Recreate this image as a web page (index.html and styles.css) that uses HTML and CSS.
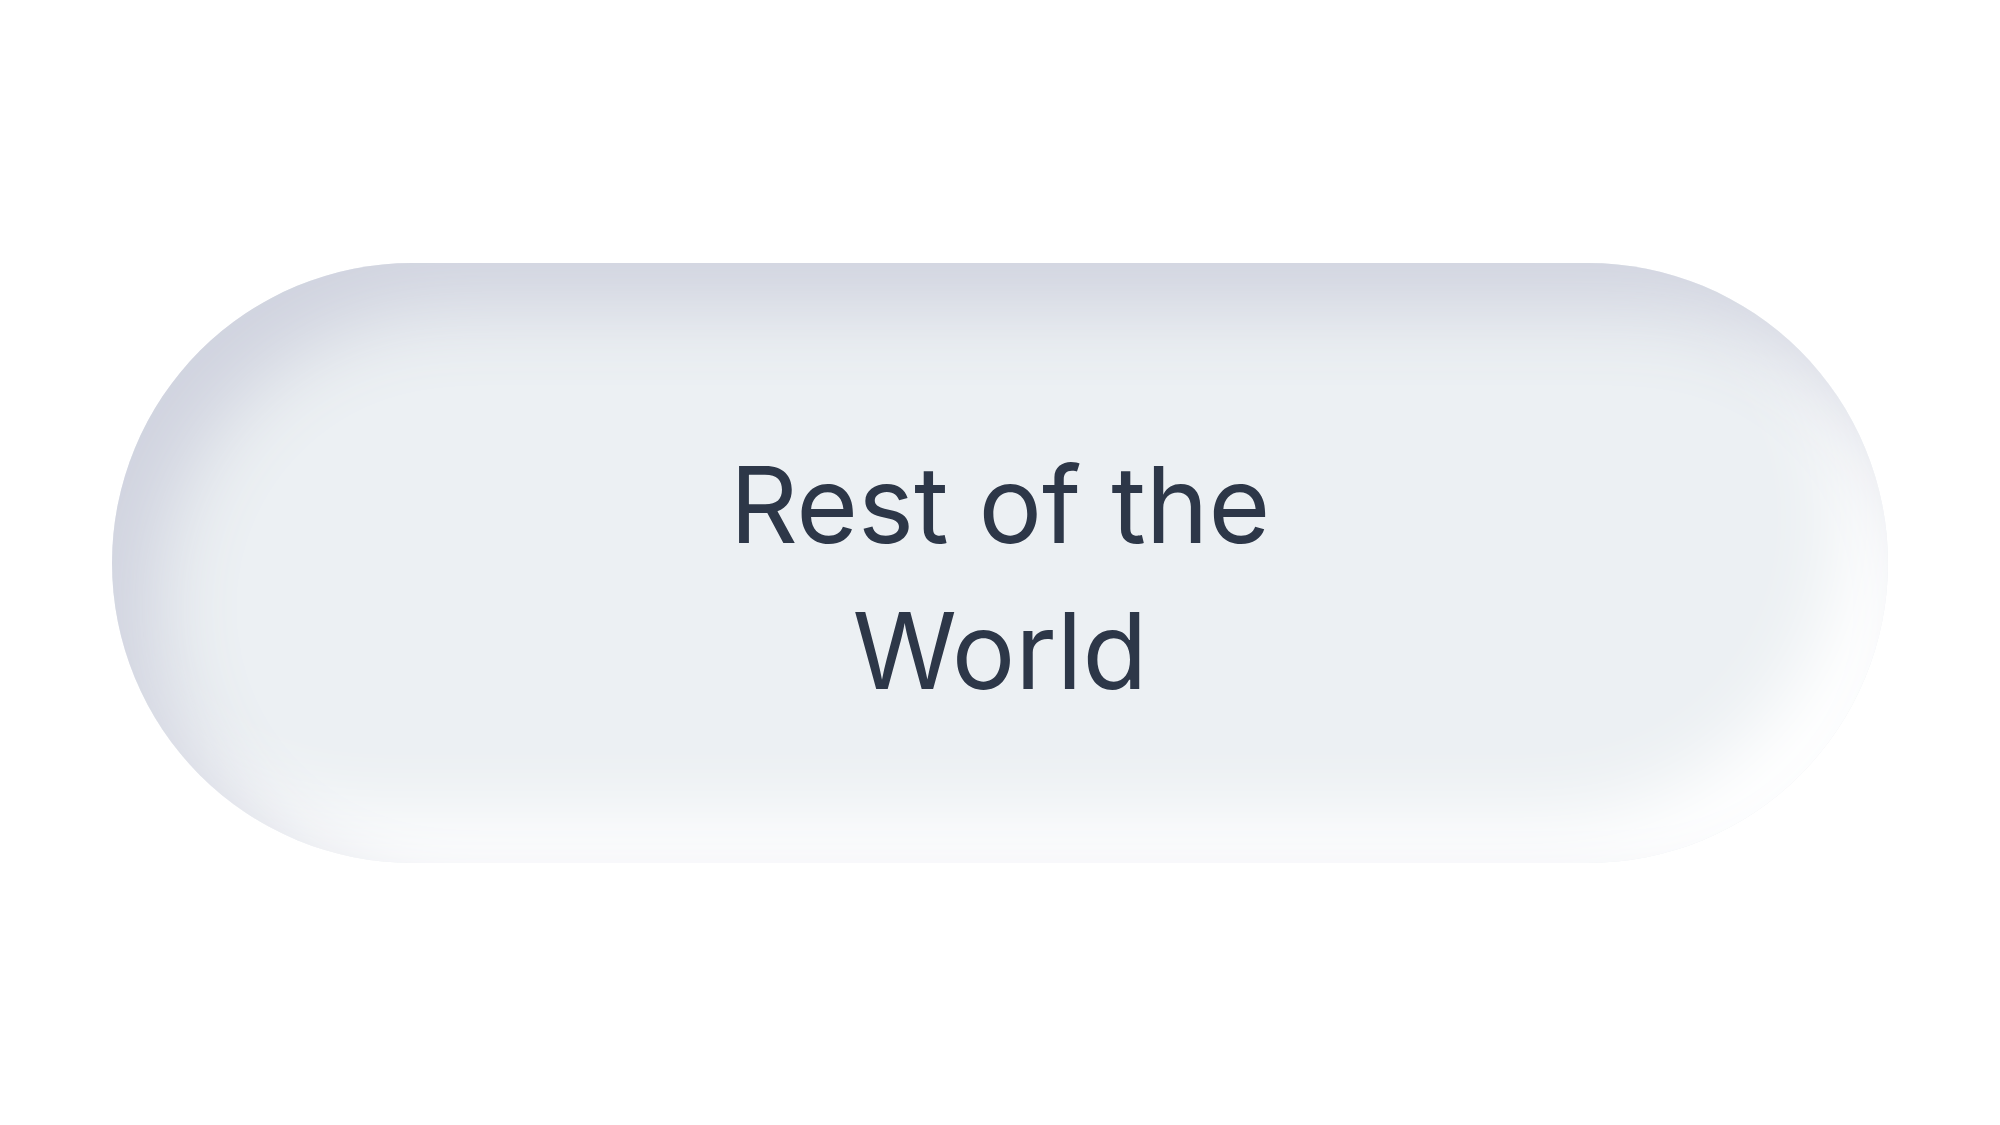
FILE: index.html
```html
<!DOCTYPE html>
<html lang="en">
  <head>
    <meta charset="UTF-8" />
    <meta name="viewport" content="width=device-width, initial-scale=1.0" />
    <title>Region</title>
    <link rel="stylesheet" href="styles.css">
  </head>
  <body>
    <!-- Region pill -->
    <div class="region">
      <span class="label">Rest of the World</span>
    </div>
  </body>
</html>
```
FILE: styles.css
```css
body {
  font-family: Inter, "Noto Sans", sans-serif;
  display: flex;
  justify-content: center;
  align-items: center;
  height: 100vh;
  background-color: #ffffff;
  margin: 0;
}
.region {
  width: 1776px;
  height: 600px;
  box-sizing: border-box;
  border-radius: 300px;
  background: #ecf0f3;
  box-shadow: inset 45px 45px 80px #d0d3df, inset -45px -45px 80px #ffffff;
  display: flex;
  justify-content: center;
  align-items: center;
  padding-top: 30px;
}
.label {
  max-width: 600px;
  text-align: center;
  font-size: 106px;
  line-height: 146px;
  color: #2d3748;
}
```
